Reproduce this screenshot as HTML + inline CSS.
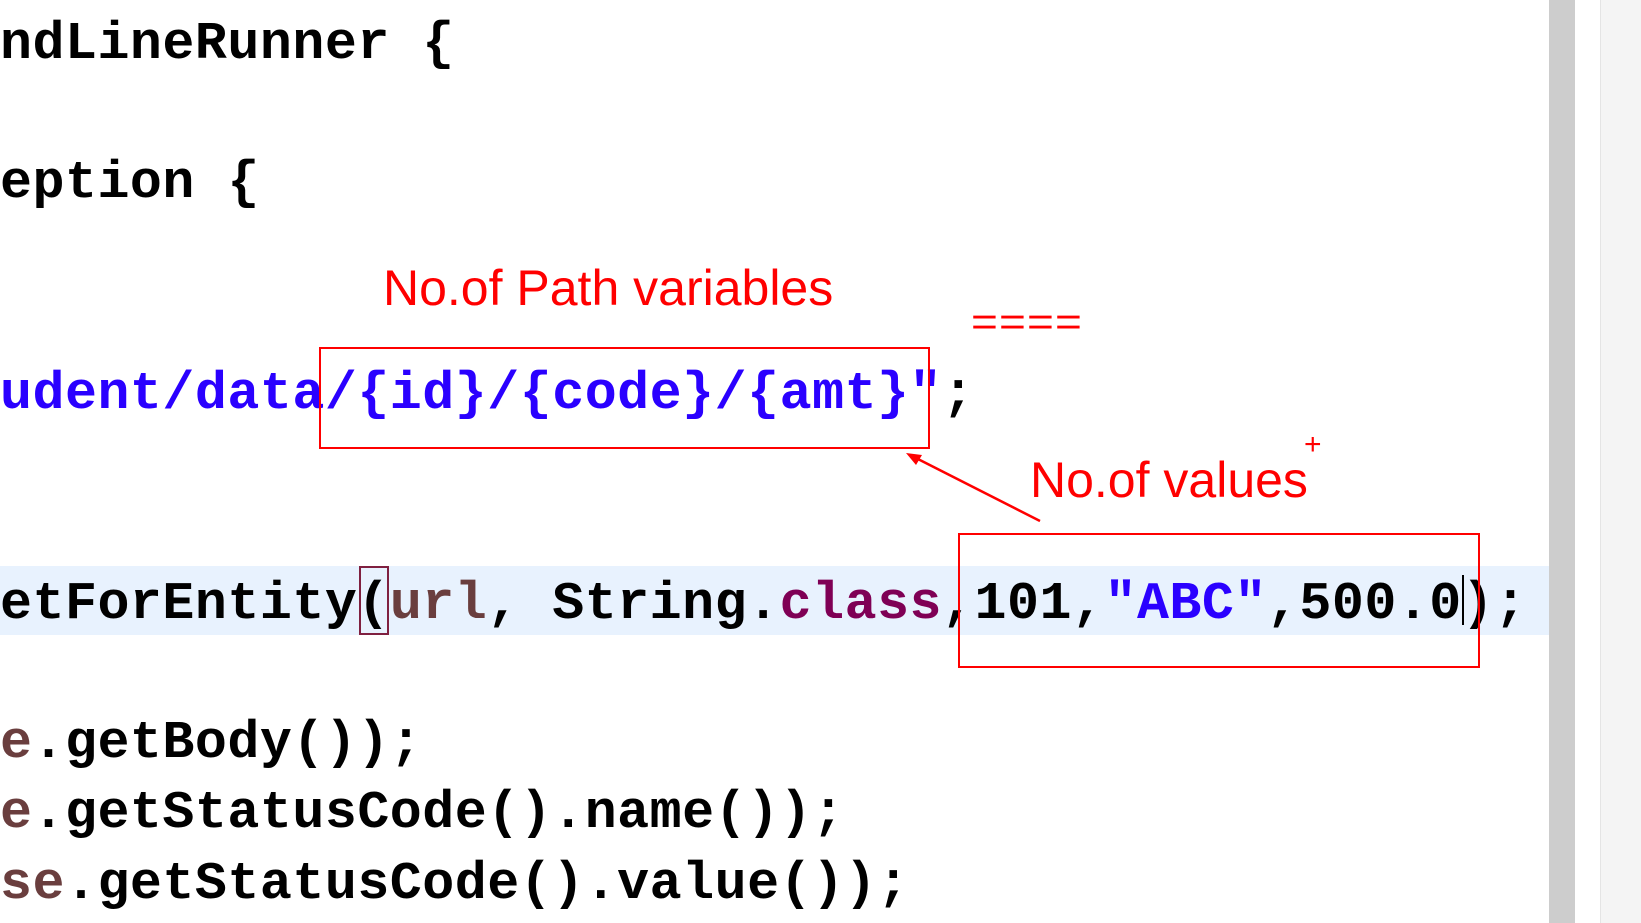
<!DOCTYPE html>
<html><head><meta charset="utf-8"><style>
html,body{margin:0;padding:0;width:1641px;height:923px;overflow:hidden;background:#fff;position:relative}
.l{position:absolute;left:0;height:64px;line-height:64px;font-family:"Liberation Mono",monospace;font-weight:bold;font-size:53.3px;letter-spacing:0.5px;color:#000;white-space:pre}
.b{color:#2a00ff}.v{color:#6a3e3e}.k{color:#7f0055}
.r{position:absolute;color:#ff0000;font-family:"Liberation Sans",sans-serif;white-space:pre;transform-origin:0 50%}
.box{position:absolute;border:2.5px solid #ff0000;box-sizing:border-box}
</style></head><body>
<div style="position:absolute;left:0;top:566px;width:1549px;height:69px;background:#e8f2fe"></div>
<div style="position:absolute;left:1549px;top:0;width:26px;height:923px;background:#cdcdcd"></div>
<div style="position:absolute;left:1575px;top:0;width:25px;height:923px;background:#fff"></div>
<div style="position:absolute;left:1600px;top:0;width:41px;height:923px;background:#f4f4f4;border-left:1px solid #e4e4e4"></div>

<div class="l" style="top:13px">ndLineRunner {</div>
<div class="l" style="top:152px">eption {</div>
<div class="l" style="top:363px"><span class="b">udent/data/{id}/{code}/{amt}"</span>;</div>
<div class="l" style="top:573px">etForEntity(<span class="v">url</span>, String.<span class="k">class</span>,101,<span class="b">"ABC"</span>,500.0);</div>
<div class="l" style="top:712px"><span class="v">e</span>.getBody());</div>
<div class="l" style="top:782px"><span class="v">e</span>.getStatusCode().name());</div>
<div class="l" style="top:853px"><span class="v">se</span>.getStatusCode().value());</div>

<div style="position:absolute;left:359px;top:566px;width:30px;height:69px;border:2px solid #7f2040;box-sizing:border-box"></div>
<div style="position:absolute;left:1462px;top:575px;width:2px;height:50px;background:#000"></div>

<div class="box" style="left:319px;top:347px;width:611px;height:102px"></div>
<div class="box" style="left:958px;top:533px;width:522px;height:135px"></div>

<div class="r" style="left:383px;top:260px;font-size:50px;line-height:56px;transform:scaleX(1.0)">No.of Path variables</div>
<div class="r" style="left:971px;top:300px;font-size:40px;line-height:44px;letter-spacing:1px;transform:scaleX(1.15)">====</div>
<div class="r" style="left:1030px;top:452px;font-size:50px;line-height:56px;transform:scaleX(1.0)">No.of values</div>
<div class="r" style="left:1304px;top:430px;font-size:30px;line-height:30px">+</div>

<svg style="position:absolute;left:0;top:0" width="1641" height="923">
<line x1="1040" y1="521" x2="912" y2="456" stroke="#ff0000" stroke-width="2.5"/>
<polygon points="906,453 922,455 916,465" fill="#ff0000"/>
</svg>
</body></html>
